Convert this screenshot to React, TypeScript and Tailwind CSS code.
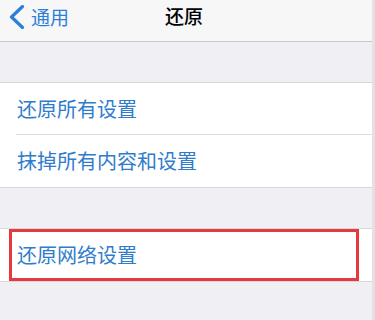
export default function App() {
  const font = { fontFamily: '"Noto Sans CJK SC", "Noto Sans", sans-serif' }

  return (
    <div className="w-[375px] h-[320px] overflow-hidden bg-[#efeff4] flex" style={font}>
      <div className="flex-1 flex flex-col">
        {/* nav bar */}
        <div className="h-[42px] bg-[#f7f7f8] border-b border-[#c8c8cc] relative flex items-center">
          <div className="flex items-center pl-[8px] text-[#2c7fd8] -mt-[8px]">
            <svg width="18" height="24" viewBox="0 0 18 24" fill="none">
              <path d="M14.5 1.5 L3.5 12 L14.5 22.5" stroke="#2c7fd8" strokeWidth="3.2" strokeLinecap="round" strokeLinejoin="round" />
            </svg>
            <span className="ml-[5px] text-[19px] leading-none">通用</span>
          </div>
          <div className="absolute left-0 right-0 top-[6px] text-center text-[19px] leading-none text-black font-medium pr-[4px]">
            还原
          </div>
        </div>

        <div className="h-[41px] border-b border-[#d8d8dc]" />

        <div className="bg-white border-b border-[#d8d8dc]">
          <div className="ml-[16px] h-[52px] flex items-center pl-[1px] text-[20px] text-[#2f7ccc] border-b border-[#dcdcdf]">
            还原所有设置
          </div>
          <div className="h-[52px] flex items-center pl-[17px] text-[20px] text-[#2f7ccc]">
            抹掉所有内容和设置
          </div>
        </div>

        <div className="h-[41px] border-b border-[#d8d8dc]" />

        <div className="bg-white border-b border-[#d8d8dc] px-[9px]">
          <div className="h-[52px] border-[3px] border-[#e5393f] flex items-center pl-[5px] text-[20px] text-[#2f7ccc] w-[350px]">
            还原网络设置
          </div>
        </div>
      </div>
      <div className="w-[3px] bg-[#e2e2e4]" />
    </div>
  )
}
